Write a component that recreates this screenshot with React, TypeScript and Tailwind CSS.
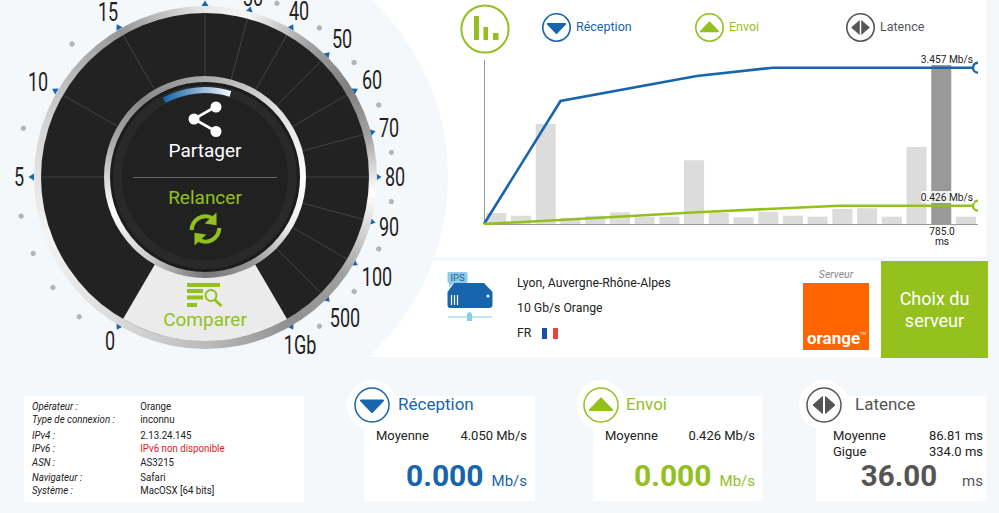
const BLUE = '#1765ad'
const GREEN = '#93c01f'
const GREY = '#555555'

const ticks = [-150, -90, -60, -30, 0, 15, 30, 45, 60, 75, 90, 105, 120, 135, 150]
const lines = [-90, -60, -30, 0, 15, 30, 45, 60, 75, 90, 105, 120, 135]
const dots = [-138, -126, -114, -102, -75, -45, 22.5, 37.5, 52.5, 67.5, 82.5, 97.5, 112.5, 127.5, 142.5]
const labels = [
  { t: '0', x: -95, y: 164 },
  { t: '5', x: -186, y: 0 },
  { t: '10', x: -167, y: -95 },
  { t: '15', x: -97, y: -165 },
  { t: '30', x: 48, y: -180 },
  { t: '40', x: 94, y: -166 },
  { t: '50', x: 137, y: -138 },
  { t: '60', x: 167, y: -97 },
  { t: '70', x: 184, y: -49 },
  { t: '80', x: 190, y: 0 },
  { t: '90', x: 184, y: 50 },
  { t: '100', x: 172, y: 100 },
  { t: '500', x: 140, y: 141 },
  { t: '1Gb', x: 95, y: 168 },
]
const bars = [213, 215.7, 124, 217.7, 215.7, 212.3, 216.7, 216.7, 160.3, 213, 217.3, 211.7, 215.7, 216.7, 209, 208.3, 216.7, 147, 65, 216.7]

function RingIcon({ kind, size = 36 }: { kind: 'down' | 'up' | 'latency'; size?: number }) {
  const color = kind === 'down' ? BLUE : kind === 'up' ? GREEN : GREY
  return (
    <svg width={size} height={size} viewBox="0 0 36 36" className="shrink-0">
      <circle cx="18" cy="18" r="17" fill="white" stroke={color} strokeWidth={size > 30 ? 1.5 : 2} />
      {kind === 'down' && <path d="M7 13.5H29L18 25Z" fill={color} stroke={color} strokeWidth="2" strokeLinejoin="round" />}
      {kind === 'up' && <path d="M7 23H29L18 11.5Z" fill={color} stroke={color} strokeWidth="2" strokeLinejoin="round" />}
      {kind === 'latency' && (
        <>
          <path d="M16.5 9.5V26.5L7 18Z" fill={color} stroke={color} strokeWidth="1" strokeLinejoin="round" />
          <path d="M19.5 9.5V26.5L29 18Z" fill={color} stroke={color} strokeWidth="1" strokeLinejoin="round" />
        </>
      )}
    </svg>
  )
}

function GaugeScale() {
  return (
    <svg viewBox="-243 -243 486 486" className="absolute inset-0 h-full w-full">
      {ticks.map((a) => (
        <polygon key={a} points="-3.5,-171 3.5,-171 0,-176.5" fill={BLUE} transform={`rotate(${a})`} />
      ))}
      {dots.map((a) => (
        <circle key={a} cx="0" cy="-188" r="2.6" fill="#b5b5b5" transform={`rotate(${a})`} />
      ))}
      {labels.map((l) => (
        <text
          key={l.t}
          textAnchor="middle"
          dominantBaseline="central"
          fontSize="25"
          fill="#222"
          transform={`translate(${l.x} ${l.y}) scale(.72 1)`}
        >
          {l.t}
        </text>
      ))}
    </svg>
  )
}

function GaugeDisc() {
  return (
    <svg viewBox="-164 -164 328 328" className="block h-full w-full">
      <circle cx="0" cy="0" r="164" fill="#222222" />
      <path d="M-82 142.03A164 164 0 0 0 82 142.03L40 70H-40Z" fill="#ebebeb" />
      {lines.map((a) => (
        <line key={a} x1="0" y1="-90" x2="0" y2="-164" stroke="#484848" strokeWidth="0.8" transform={`rotate(${a})`} />
      ))}
      <g transform="translate(-18 106)">
        <rect x="0" y="0" width="33" height="4" fill={GREEN} />
        <rect x="0" y="6" width="16" height="4" fill={GREEN} />
        <rect x="0" y="12.5" width="16" height="4" fill={GREEN} />
        <rect x="0" y="20" width="10" height="4" fill={GREEN} />
        <circle cx="24" cy="12.5" r="5.5" fill="none" stroke={GREEN} strokeWidth="2" />
        <line x1="28" y1="17" x2="34.5" y2="23" stroke={GREEN} strokeWidth="3" />
      </g>
      <text x="0" y="149" textAnchor="middle" fontSize="19" fill={GREEN}>
        Comparer
      </text>
    </svg>
  )
}

function GaugeHub() {
  return (
    <div className="absolute left-1/2 top-1/2 h-[202px] w-[202px] -translate-x-1/2 -translate-y-1/2 rounded-full bg-[conic-gradient(#aaa_0deg,#ddd_45deg,#fff_90deg,#eee_120deg,#999_150deg,#777_180deg,#ccc_215deg,#fff_250deg,#aaa_290deg,#888_320deg,#aaa_360deg)] p-[6px]">
      <div className="relative h-full w-full rounded-full bg-[#1c1c1c] p-[3px]">
        <div className="h-full w-full rounded-full bg-[#292929] p-[9px]">
          <div className="flex h-full w-full flex-col items-center rounded-full bg-[#212121] pt-[6px]">
            <svg width="34" height="36" viewBox="0 0 34 36" className="mt-[1px]">
              <path d="M28 5.5L6 18L28 30.5" fill="none" stroke="white" strokeWidth="2.6" />
              <circle cx="28" cy="6" r="5.5" fill="white" />
              <circle cx="6" cy="18" r="5.5" fill="white" />
              <circle cx="28" cy="30.5" r="5.5" fill="white" />
            </svg>
            <div className="mt-[2px] text-[19px] leading-[24px] text-white">Partager</div>
            <div className="mt-[14px] h-px w-[144px] bg-[#666]" />
            <div className="mt-[8px] text-[19px] leading-[24px] text-[#93c01f]">Relancer</div>
            <svg width="33" height="36" viewBox="0 0 36 36" className="mt-[1px]">
              <path d="M3 19A15 15 0 0 1 25 6" fill="none" stroke={GREEN} strokeWidth="4.5" />
              <polygon points="30,0 30,14 17,12" fill={GREEN} />
              <path d="M33 17A15 15 0 0 1 11 30" fill="none" stroke={GREEN} strokeWidth="4.5" />
              <polygon points="6,36 6,22 19,24" fill={GREEN} />
            </svg>
          </div>
        </div>
        <svg viewBox="-95 -95 190 190" className="absolute inset-0 h-full w-full">
          <defs>
            <linearGradient id="progress" x1="0" x2="1" y1="0" y2="0">
              <stop offset="0" stopColor={BLUE} />
              <stop offset="1" stopColor="#f4f8fc" />
            </linearGradient>
          </defs>
          <path d="M-40.8 -76.8A87 87 0 0 1 25.4 -83.2" fill="none" stroke="url(#progress)" strokeWidth="6" />
        </svg>
      </div>
    </div>
  )
}

function Gauge() {
  return (
    <div className="absolute left-[-38px] top-[-66px] flex h-[486px] w-[486px] items-center justify-center rounded-full bg-[#f5f8fb]">
      <GaugeScale />
      <div className="relative h-[343px] w-[343px] rounded-full bg-[conic-gradient(#e8e8e8_0deg,#f5f5f5_15deg,#a0a0a0_38deg,#808080_58deg,#a0a0a0_75deg,#fff_95deg,#a0a0a0_125deg,#909090_150deg,#bbb_180deg,#ddd_215deg,#f4f4f4_250deg,#d2d2d2_290deg,#979797_330deg,#e8e8e8_360deg)] p-[7.5px]">
        <GaugeDisc />
        <GaugeHub />
      </div>
    </div>
  )
}

function Chart() {
  return (
    <svg viewBox="480 55 507 202" width="507" height="202" className="ml-[120px] block">
      {bars.map((top, i) => (
        <rect
          key={i}
          x={486.3 + i * 24.72}
          y={top}
          width="20"
          height={224 - top}
          fill={i === 18 ? '#999999' : '#dcdcdc'}
        />
      ))}
      <path d="M484.5 60V224.5H978" fill="none" stroke="#999" strokeWidth="1" />
      <path d="M484 224L560.5 101L696.7 76L773 67.7H974" fill="none" stroke={BLUE} strokeWidth="2.6" />
      <path d="M484 224L560 220L697 212.3L773 208.7L839 205.7H974" fill="none" stroke={GREEN} strokeWidth="2.6" />
      <path d="M978 62.7A5 5 0 0 0 978 72.7" fill="white" stroke={BLUE} strokeWidth="2.4" />
      <path d="M978 200.7A5 5 0 0 0 978 210.7" fill="white" stroke={GREEN} strokeWidth="2.4" />
      <rect x="921" y="191" width="53" height="12" fill="white" fillOpacity="0.85" />
      <text x="973" y="62.5" textAnchor="end" fontSize="10.2" fill="#222">3.457 Mb/s</text>
      <text x="973" y="200.5" textAnchor="end" fontSize="10.2" fill="#222">0.426 Mb/s</text>
      <text x="942" y="234.5" textAnchor="middle" fontSize="10.2" fill="#222">785.0</text>
      <text x="942" y="244.5" textAnchor="middle" fontSize="10.2" fill="#222">ms</text>
    </svg>
  )
}

function ChartPanel() {
  return (
    <div className="h-[257px] bg-white">
      <div className="flex h-[55px] pl-[100px] pt-[4px]">
        <svg width="50" height="50" viewBox="0 0 50 50" className="mr-[32px] shrink-0">
          <circle cx="25" cy="25" r="23.6" fill="none" stroke={GREEN} strokeWidth="2" />
          <rect x="14" y="12" width="5" height="24" fill={GREEN} />
          <rect x="23.5" y="23" width="4.5" height="13" fill={GREEN} />
          <rect x="33" y="29" width="5.5" height="7" fill={GREEN} />
        </svg>
        <div className="flex w-[153px] items-start gap-[5px] pt-[9px] text-[12.5px] leading-[28px] text-[#1765ad]">
          <RingIcon kind="down" size={29} />
          <span>Réception</span>
        </div>
        <div className="flex w-[151px] items-start gap-[5px] pt-[9px] text-[12.5px] leading-[28px] text-[#93c01f]">
          <RingIcon kind="up" size={29} />
          <span>Envoi</span>
        </div>
        <div className="flex items-start gap-[5px] pt-[9px] text-[12.5px] leading-[28px] text-[#555]">
          <RingIcon kind="latency" size={29} />
          <span>Latence</span>
        </div>
      </div>
      <Chart />
    </div>
  )
}

function ServerPanel() {
  return (
    <div className="mt-[4px] flex h-[96px] bg-white">
      <svg width="46" height="50" viewBox="0 0 46 50" className="ml-[87px] mt-[11px] shrink-0">
        <rect x="0.5" y="0" width="20" height="11" rx="1.5" fill="#8ccbee" />
        <path d="M2 10V15L8 10Z" fill="#8ccbee" />
        <text x="10.5" y="9" textAnchor="middle" fontSize="9.5" fill="#2b5f8f">IPS</text>
        <path d="M7 11H37L45.5 20V33Q45.5 36 42 36H3.5Q0.5 36 0.5 33V20Z" fill="#1765ad" />
        <path d="M4.5 23V33M7.5 23V33M10.5 23V33" stroke="white" strokeWidth="1.2" />
        <circle cx="41" cy="24" r="1.5" fill="white" />
        <path d="M1 45H45" stroke="#8ccbee" strokeWidth="1.2" />
        <path d="M20 42L22.5 39.5L25 42V49H20Z" fill="#8ccbee" />
      </svg>
      <div className="ml-[24px] flex flex-col pt-[10px] text-[12.25px] leading-[25px] text-[#222]">
        <span>Lyon, Auvergne-Rhône-Alpes</span>
        <span>10 Gb/s Orange</span>
        <span className="flex items-center">
          FR
          <span className="ml-[11px] flex h-[11px] w-[16px]">
            <span className="w-[5px] bg-[#1b4fa3]" />
            <span className="w-[6px] bg-white" />
            <span className="w-[5px] bg-[#ef4135]" />
          </span>
        </span>
      </div>
      <div className="ml-auto flex w-[66px] flex-col items-center">
        <span className="mt-[7px] text-[10.5px] italic leading-[13px] text-[#888]">Serveur</span>
        <div className="mt-[2px] flex h-[67px] w-[66px] items-end bg-[#ff6600] pb-[1px] pl-[4px] text-[17px] font-bold leading-[22px] text-white">
          orange
          <span className="mb-[13px] text-[4px] font-normal leading-[4px]">TM</span>
        </div>
      </div>
      <div className="-mr-[1px] ml-[12px] flex h-[97px] w-[107px] shrink-0 items-center justify-center bg-[#95c11f] text-center text-[18px] leading-[22px] text-white">
        <span>
          Choix du
          <br />
          serveur
        </span>
      </div>
    </div>
  )
}

function InfoCard() {
  const row = 'flex h-[13.5px] items-center'
  const label = 'w-[123px] italic'
  return (
    <div className="ml-[24px] h-[106px] w-[280px] overflow-hidden bg-white pl-[8px] pt-[4px]">
      <div className="w-[320px] origin-left scale-x-[.88] text-[11px] text-[#222]">
        <div className={row}><span className={label}>Opérateur :</span><span>Orange</span></div>
        <div className={row}><span className={label}>Type de connexion :</span><span>inconnu</span></div>
        <div className={`${row} mt-[2px]`}><span className={label}>IPv4 :</span><span>2.13.24.145</span></div>
        <div className={row}><span className={label}>IPv6 :</span><span className="text-[#e01b1b]">IPv6 non disponible</span></div>
        <div className={row}><span className={label}>ASN :</span><span>AS3215</span></div>
        <div className={`${row} mt-[1.5px]`}><span className={label}>Navigateur :</span><span>Safari</span></div>
        <div className={row}><span className={label}>Système :</span><span>MacOSX [64 bits]</span></div>
      </div>
    </div>
  )
}

function Badge({ kind }: { kind: 'down' | 'up' | 'latency' }) {
  return (
    <div className="absolute left-[-17px] top-[-16px] flex h-[50px] w-[50px] items-center justify-center rounded-full bg-white">
      <RingIcon kind={kind} />
    </div>
  )
}

function SpeedCard({ kind, title, avg, value, className, titleClass, titleIndent }: {
  kind: 'down' | 'up'
  title: string
  avg: string
  value: string
  className: string
  titleClass: string
  titleIndent: string
}) {
  return (
    <div className={`relative h-[105px] bg-white ${className}`}>
      <Badge kind={kind} />
      <div className={`relative text-[17px] leading-[16px] ${titleClass} ${titleIndent}`}>{title}</div>
      <div className="mt-[16px] flex justify-between pl-[12px] pr-[8px] text-[13px] leading-[16px] text-[#222]">
        <span>Moyenne</span>
        <span>{avg}</span>
      </div>
      <div className={`mt-[14px] flex items-baseline justify-end gap-[8px] pr-[8px] ${titleClass}`}>
        <span className="text-[30px] font-bold leading-[36px]">{value}</span>
        <span className="text-[15px]">Mb/s</span>
      </div>
    </div>
  )
}

function LatencyCard() {
  return (
    <div className="relative ml-[53px] h-[105px] w-[171px] bg-white">
      <Badge kind="latency" />
      <div className="relative ml-[39px] text-[17px] leading-[16px] text-[#555]">Latence</div>
      <div className="mt-[16px] flex justify-between pl-[17px] pr-[4px] text-[13px] leading-[16px] text-[#222]">
        <span>Moyenne</span>
        <span>86.81 ms</span>
      </div>
      <div className="flex justify-between pl-[17px] pr-[4px] text-[13px] leading-[16px] text-[#222]">
        <span>Gigue</span>
        <span>334.0 ms</span>
      </div>
      <div className="-mt-[2px] flex items-baseline justify-end gap-[25px] pr-[4px] text-[#555]">
        <span className="text-[29.5px] font-bold leading-[36px]">36.00</span>
        <span className="text-[15px]">ms</span>
      </div>
    </div>
  )
}

export default function App() {
  return (
    <div className="relative h-[513px] w-[999px] overflow-hidden bg-[#f5f8fb] font-['Roboto',sans-serif]">
      <div className="ml-[360px] w-[627px]">
        <ChartPanel />
        <ServerPanel />
      </div>
      <Gauge />
      <div className="relative mt-[39px] flex">
        <InfoCard />
        <SpeedCard
          kind="down"
          title="Réception"
          avg="4.050 Mb/s"
          value="0.000"
          className="ml-[60px] w-[171px]"
          titleClass="text-[#1765ad]"
          titleIndent="ml-[34px]"
        />
        <SpeedCard
          kind="up"
          title="Envoi"
          avg="0.426 Mb/s"
          value="0.000"
          className="ml-[58px] w-[170px]"
          titleClass="text-[#93c01f]"
          titleIndent="ml-[33px]"
        />
        <LatencyCard />
      </div>
    </div>
  )
}
